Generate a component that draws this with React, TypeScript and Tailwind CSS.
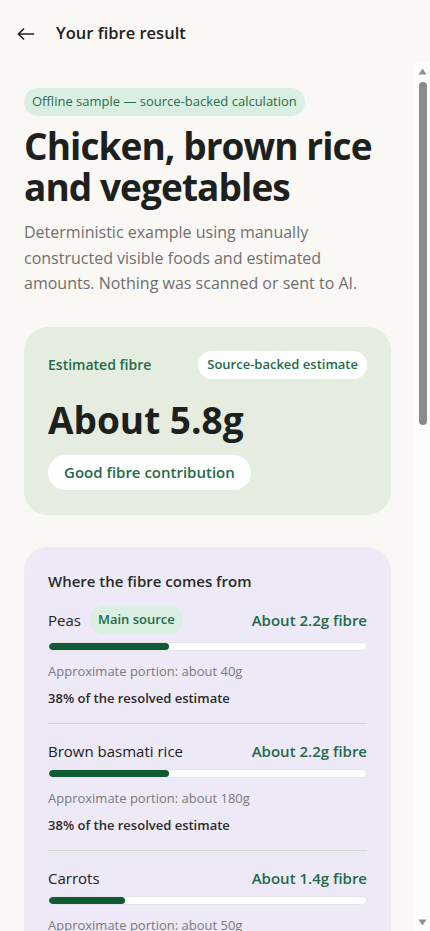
type Source = {
  name: string;
  fibre: string;
  share: number;
  portion: string;
  main?: boolean;
};

const sources: Source[] = [
  { name: "Peas", fibre: "About 2.2g fibre", share: 38, portion: "about 40g", main: true },
  { name: "Brown basmati rice", fibre: "About 2.2g fibre", share: 38, portion: "about 180g" },
  { name: "Carrots", fibre: "About 1.4g fibre", share: 24, portion: "about 50g" },
  { name: "Chicken breast", fibre: "About 0g fibre", share: 0, portion: "about 120g" },
];

const notes = [
  "Foods were listed by hand for this sample, not detected from a photo.",
  "Portions are rough visual estimates and can easily be off by a third.",
  "Fibre values come from published food composition tables.",
  "Anything we could not match to a source is left out of the total.",
];

// the page scrolls under a fixed header; the classic scrollbar is drawn by hand
function Scrollbar() {
  return (
    <div aria-hidden className="flex w-[15px] shrink-0 flex-col items-center bg-[#fcfcfb] pb-[5px] pt-[5px]">
      <svg width="9" height="7" viewBox="0 0 9 7">
        <polygon points="4.5,0.5 8.5,6.5 0.5,6.5" fill="#8f8f8f" />
      </svg>
      <div className="mt-[7px] h-[343px] w-2 rounded-full bg-[#8b8b8b]" />
      <div className="flex-1" />
      <svg width="9" height="7" viewBox="0 0 9 7">
        <polygon points="0.5,0.5 8.5,0.5 4.5,6.5" fill="#8f8f8f" />
      </svg>
    </div>
  );
}

export default function App() {
  return (
    <div className="flex h-screen flex-col bg-[#faf8f4] font-['Open_Sans',sans-serif] text-[#1f2421]">
      <header className="flex h-[63px] shrink-0 items-center gap-[21px] pl-[17px] pt-1">
        <button type="button" aria-label="Back" className="flex h-5 w-[18px] items-center">
          <svg width="18" height="14" viewBox="0 0 18 14" fill="none" stroke="#222" strokeWidth="1.7" strokeLinecap="round" strokeLinejoin="round">
            <path d="M16.5 7H1.5" />
            <path d="M6.5 2 1.5 7 6.5 12" />
          </svg>
        </button>
        <h1 className="text-[16.5px] font-semibold text-[#222]">Your fibre result</h1>
      </header>

      <div className="flex min-h-0 flex-1">
        <main className="min-w-0 flex-1 overflow-y-auto px-6 pb-10 pt-[25px] [scrollbar-width:none]">
          <span className="inline-flex h-7 items-center rounded-full bg-[#d9efe1] px-2 text-[13px] text-[#2f6b4b]">
            Offline sample — source-backed calculation
          </span>

          <h2 className="mt-[9px] text-[37px] font-bold leading-[41px] tracking-[-0.025em] text-[#1c211e]">
            Chicken, brown rice and vegetables
          </h2>
          <p className="mt-[13px] text-[16px] leading-[25.5px] text-[#6f6f6f]">
            Deterministic example using manually constructed visible foods and estimated amounts. Nothing was scanned or sent to AI.
          </p>

          <section className="mt-[30px] rounded-[24px] bg-[#e5ede0] px-6 pb-[25px] pt-6">
            <div className="flex items-center justify-between">
              <span className="text-[14px] font-semibold text-[#236b47]">Estimated fibre</span>
              <span className="inline-flex h-7 items-center rounded-full bg-white px-[9px] text-[13px] font-semibold text-[#236b47]">
                Source-backed estimate
              </span>
            </div>
            <p className="mt-[20px] text-[37px] font-bold leading-[41px] text-[#1c211e]">About 5.8g</p>
            <span className="mt-[15px] inline-flex h-[35px] items-center rounded-full bg-white px-4 text-[15px] font-semibold text-[#236b47]">
              Good fibre contribution
            </span>
          </section>

          <section className="mt-8 rounded-[24px] bg-[#ede9f6] px-6 pb-6 pt-6">
            <h3 className="text-[15px] font-semibold leading-5 text-[#2a2a2a]">Where the fibre comes from</h3>
            <ul className="mt-[15px]">
              {sources.map((s, i) => (
                <li key={s.name} className={i > 0 ? "border-t border-[#d3d8cf] pt-[17px]" : ""}>
                  <div className="flex items-center justify-between gap-3">
                    <div className="flex items-center gap-[9px]">
                      <span className="text-[15px] font-medium leading-5 text-[#222]">{s.name}</span>
                      {s.main && (
                        <span className="inline-flex h-7 items-center rounded-full bg-[#d9efe1] px-2 text-[13px] font-semibold text-[#236b47]">
                          Main source
                        </span>
                      )}
                    </div>
                    <span className="text-[15px] font-semibold leading-5 text-[#236b47]">{s.fibre}</span>
                  </div>
                  <div className="mt-2 h-[9px] overflow-hidden rounded-full border border-[#e6e4ea] bg-white">
                    <div className="h-full rounded-full bg-[#0f5b36]" style={{ width: `${s.share}%` }} />
                  </div>
                  <p className="mt-[10px] text-[13px] leading-5 text-[#7a7a7a]">Approximate portion: {s.portion}</p>
                  <p className="mt-[7px] pb-[15px] text-[13px] font-semibold leading-5 text-[#2a2a2a]">
                    {s.share}% of the resolved estimate
                  </p>
                </li>
              ))}
            </ul>
          </section>

          <section className="mt-8 rounded-[24px] border border-[#e4e1d8] bg-white px-6 py-6">
            <h3 className="text-[15px] font-semibold text-[#2a2a2a]">How this was worked out</h3>
            <ul className="mt-4 space-y-3">
              {notes.map((n) => (
                <li key={n} className="flex gap-3 text-[14px] leading-[22px] text-[#5f5f5f]">
                  <span className="mt-[9px] h-1.5 w-1.5 shrink-0 rounded-full bg-[#236b47]" />
                  {n}
                </li>
              ))}
            </ul>
          </section>

          <section className="mt-8 rounded-[24px] bg-[#f1eee6] px-6 py-6">
            <h3 className="text-[15px] font-semibold text-[#2a2a2a]">Ways to add more fibre</h3>
            <p className="mt-3 text-[14px] leading-[22px] text-[#5f5f5f]">
              Swapping some rice for lentils or beans, or adding a side of leafy greens, would lift this meal further.
            </p>
          </section>

          <div className="mt-8 flex flex-col gap-3">
            <button type="button" className="h-12 rounded-full bg-[#0f5b36] text-[15px] font-semibold text-white">
              Scan another meal
            </button>
            <button type="button" className="h-12 rounded-full border border-[#cfd6cb] text-[15px] font-semibold text-[#236b47]">
              Back to home
            </button>
          </div>
          <p className="mt-6 text-center text-[12px] leading-5 text-[#8a8a8a]">
            Estimates are for general guidance only and are not medical advice.
          </p>
        </main>
        <Scrollbar />
      </div>
    </div>
  );
}
